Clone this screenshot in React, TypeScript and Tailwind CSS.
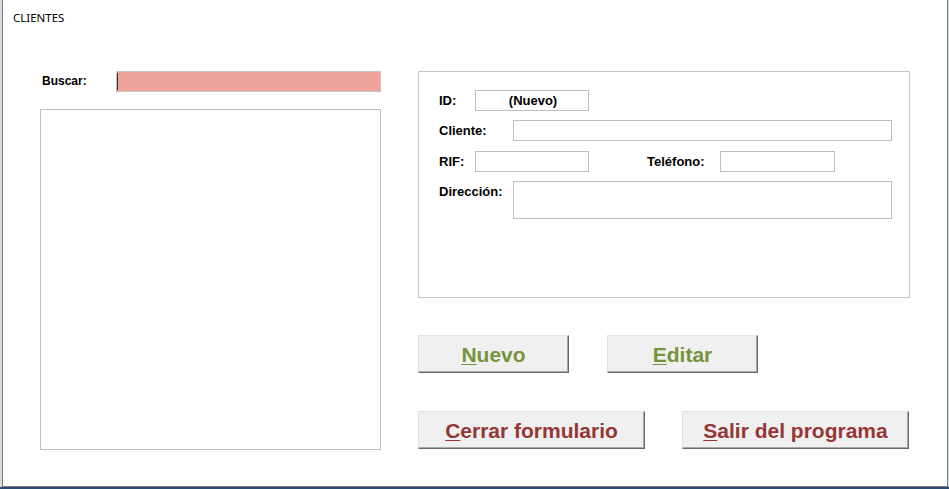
const label = "font-bold text-[13px] leading-[15px] text-black";
const box = "h-[21px] border border-[#bfbfbf] bg-white";

const FormButton = ({
  first,
  rest,
  width,
  color,
}: {
  first: string;
  rest: string;
  width: string;
  color: string;
}) => (
  <button
    className={`${width} h-[38px] bg-[#f0f0f0] border-t border-l border-t-[#e2e2e2] border-l-[#e2e2e2] border-b border-r border-b-[#6a6a6a] border-r-[#6a6a6a] shadow-[inset_-1px_-1px_0_#a8a8a8] flex items-center justify-center pt-[1px] font-bold text-[21px] ${color}`}
  >
    <span>
      <span className="underline decoration-1 underline-offset-[2px]">{first}</span>
      {rest}
    </span>
  </button>
);

export default function App() {
  return (
    <div
      className="w-[949px] h-[489px] flex flex-col bg-[#d8dce2] overflow-hidden"
      style={{ fontFamily: '"Liberation Sans", Arial, sans-serif' }}
    >
      <div className="flex-1 ml-[2px] mr-[1px] bg-white border-l border-r border-b border-[#7c7c7c] flex flex-col">
        {/* title */}
        <div
          className="h-[71px] pl-[10px] pt-[10px] text-[11.5px] leading-[16px] text-black"
          style={{ fontFamily: '"Noto Sans", "Open Sans", sans-serif' }}
        >
          CLIENTES
        </div>

        <div className="flex pl-[37px] gap-[37px]">
          {/* left column: search + list */}
          <div className="w-[341px] flex flex-col">
            <div className="flex items-center h-[21px]">
              <span className="w-[76px] pl-[2px] font-bold text-[12px] leading-[15px]">Buscar:</span>
              <div className="w-[265px] h-[21px] bg-[#f0a39b] border border-[#c4c4c4] flex items-center">
                <span className="w-px h-[17px] bg-[#333]" />
              </div>
            </div>
            <div className="mt-[17px] h-[341px] border border-[#bfbfbf] bg-white" />
          </div>

          {/* right column: details + buttons */}
          <div className="w-[492px] flex flex-col">
            <div className="h-[227px] border border-[#c6c6c6] pl-[20px] pt-[18px] flex flex-col gap-[9px]">
              <div className="flex items-center">
                <span className={`${label} w-[36px]`}>ID:</span>
                <div className={`${box} w-[114px] flex items-center justify-center pl-[2px] font-bold text-[13px]`}>
                  (Nuevo)
                </div>
              </div>
              <div className="flex items-center">
                <span className={`${label} w-[74px]`}>Cliente:</span>
                <div className={`${box} w-[379px]`} />
              </div>
              <div className="flex items-center mt-[1px]">
                <span className={`${label} w-[36px]`}>RIF:</span>
                <div className={`${box} w-[114px]`} />
                <span className={`${label} ml-[58px] w-[73px]`}>Teléfono:</span>
                <div className={`${box} w-[115px]`} />
              </div>
              <div className="flex items-start">
                <span className={`${label} w-[74px] pt-[3px]`}>Dirección:</span>
                <div className="w-[379px] h-[38px] border border-[#bfbfbf]" />
              </div>
            </div>

            <div className="mt-[37px] flex gap-[38px]">
              <FormButton first="N" rest="uevo" width="w-[151px]" color="text-[#77933c]" />
              <FormButton first="E" rest="ditar" width="w-[151px]" color="text-[#77933c]" />
            </div>
            <div className="mt-[38px] flex gap-[37px]">
              <FormButton first="C" rest="errar formulario" width="w-[227px]" color="text-[#953735]" />
              <FormButton first="S" rest="alir del programa" width="w-[227px]" color="text-[#953735]" />
            </div>
          </div>
        </div>
      </div>
      <div className="h-[2px] bg-[#2d4b70]" />
    </div>
  );
}
